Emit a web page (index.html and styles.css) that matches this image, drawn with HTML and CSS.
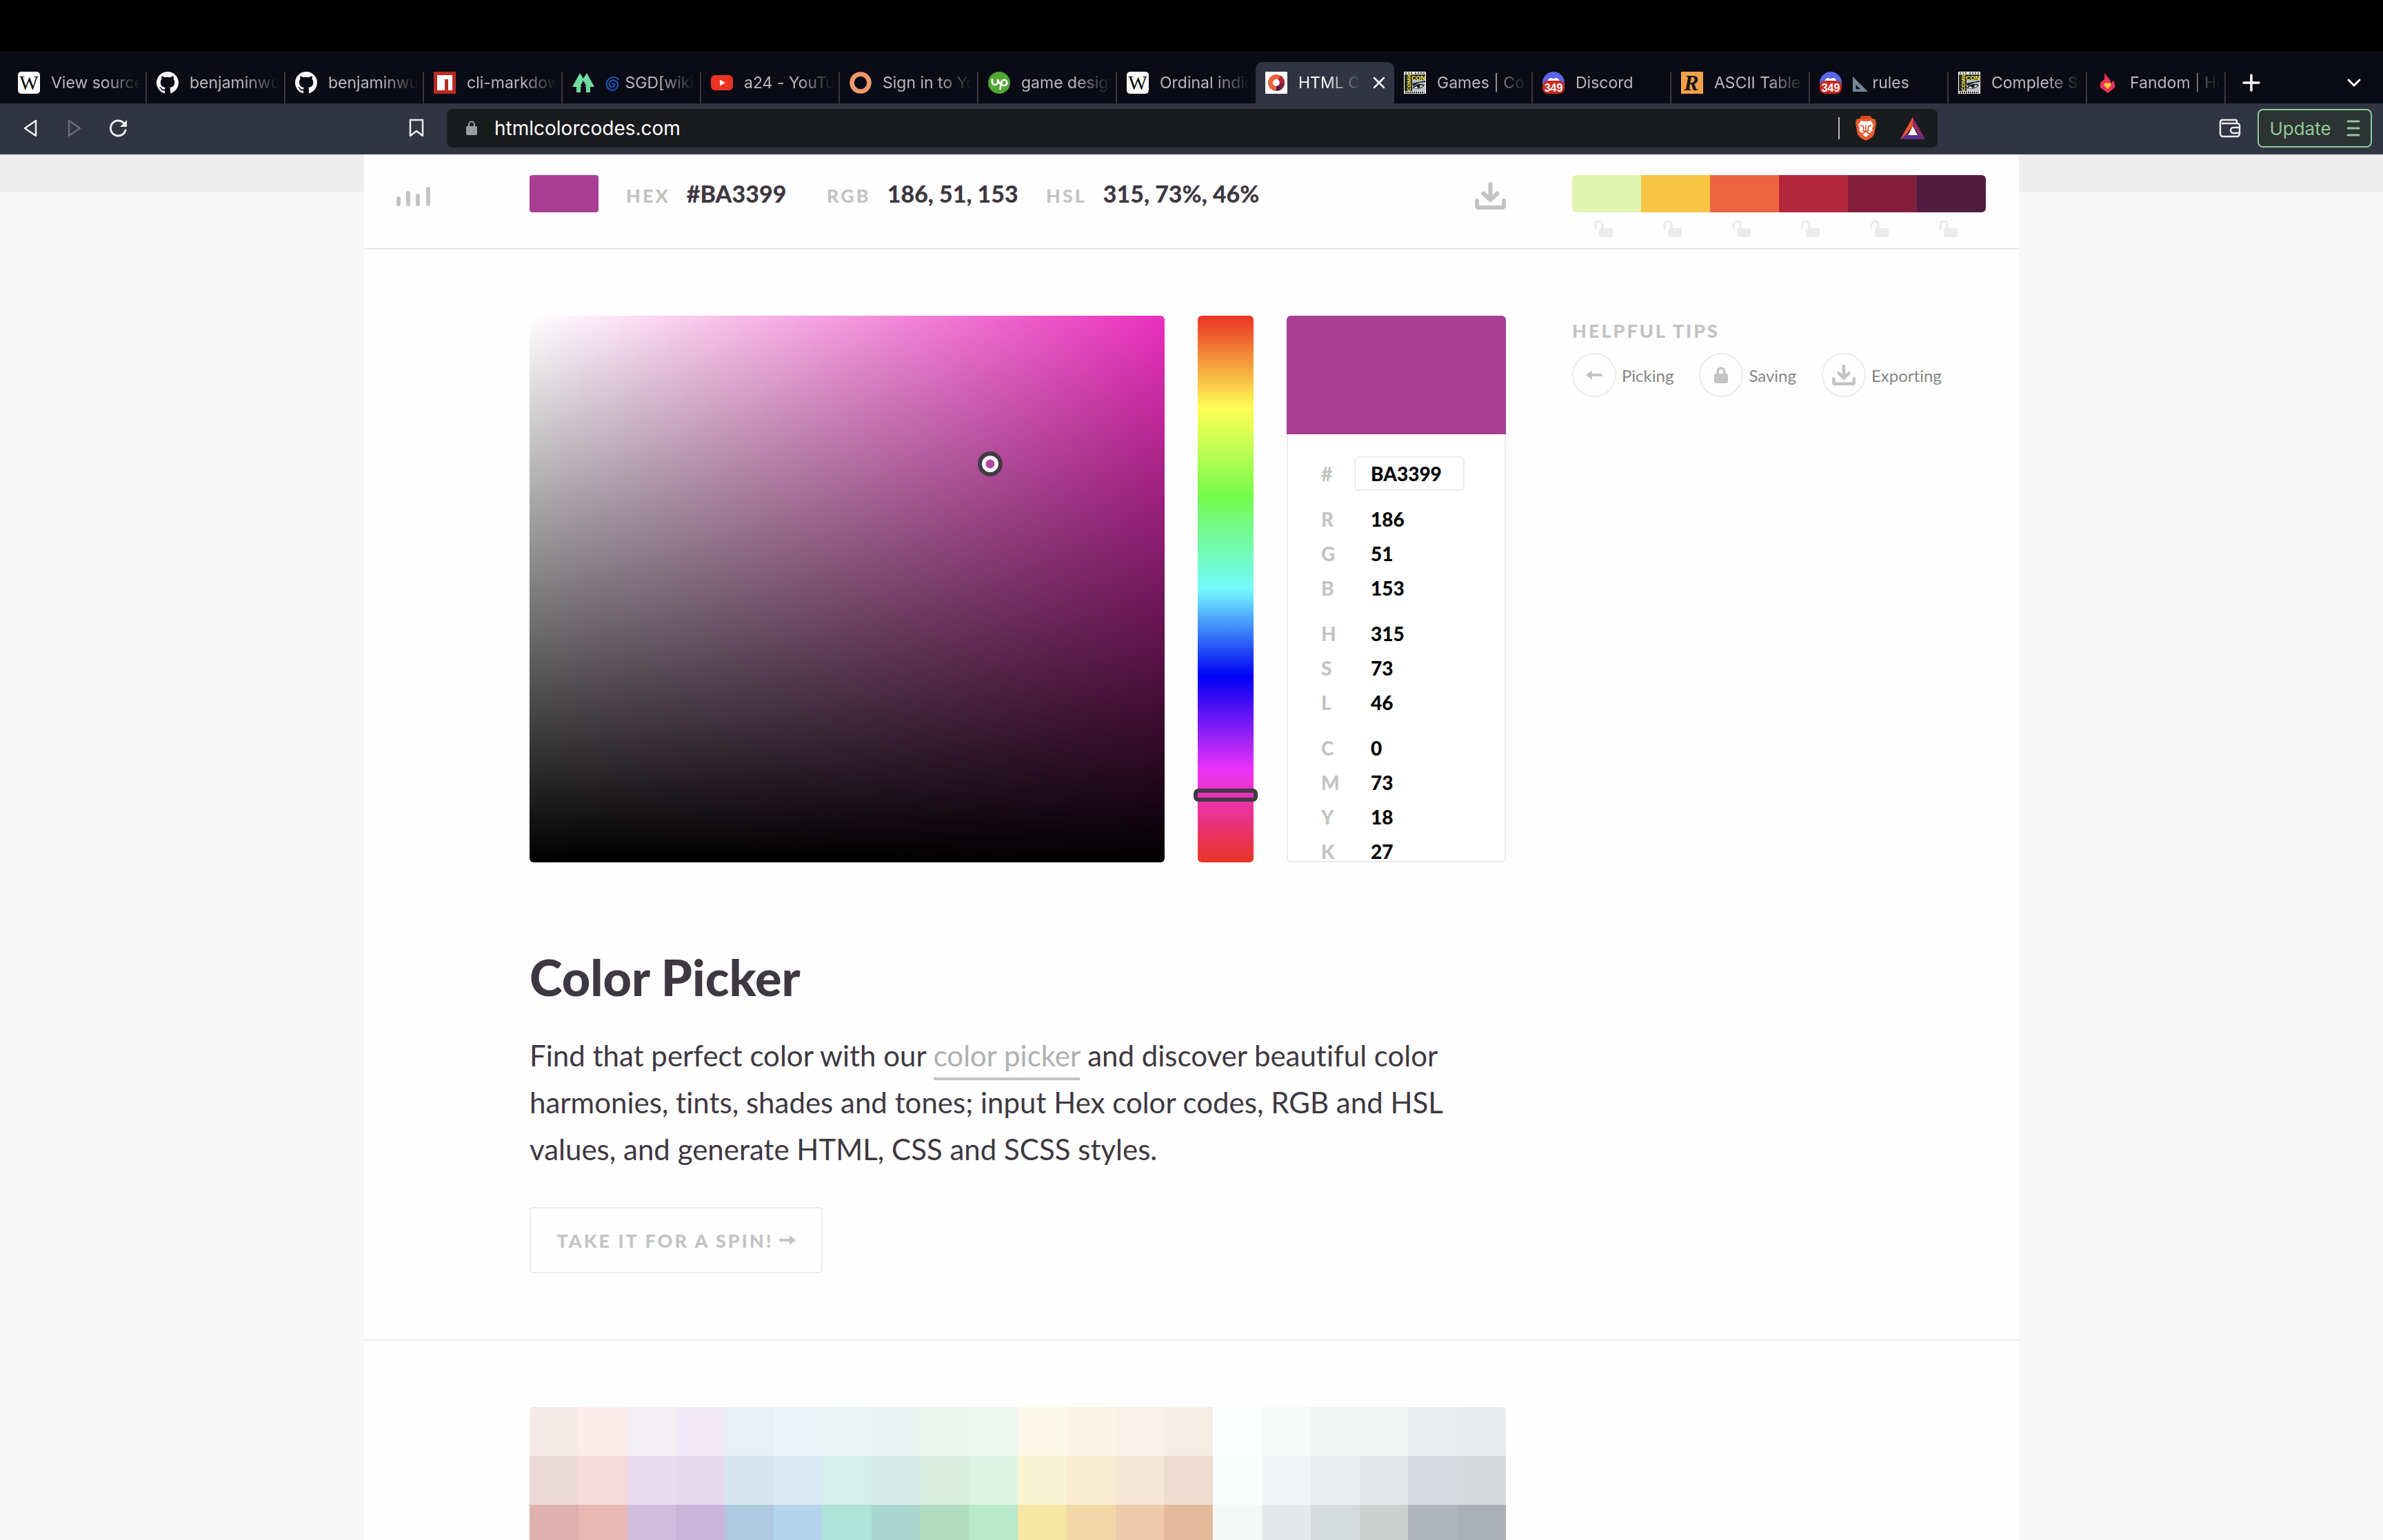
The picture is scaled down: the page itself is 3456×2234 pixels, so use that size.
FILE: index.html
```html
<!DOCTYPE html>
<html lang="en">
<head>
<meta charset="utf-8">
<title>HTML Color Codes</title>
<link rel="stylesheet" href="styles.css">
</head>
<body>
<svg class="defs" aria-hidden="true">
  <symbol id="i-wiki" viewBox="0 0 32 32"><rect width="32" height="32" rx="5" fill="#fff"/><text x="16" y="26" text-anchor="middle" font-family="Liberation Serif, serif" font-size="29" fill="#000">W</text></symbol>
  <symbol id="i-github" viewBox="0 0 16 16"><path fill="#fff" d="M8 0C3.58 0 0 3.58 0 8c0 3.54 2.29 6.53 5.47 7.59.4.07.55-.17.55-.38 0-.19-.01-.82-.01-1.49-2.01.37-2.53-.49-2.69-.94-.09-.23-.48-.94-.82-1.13-.28-.15-.68-.52-.01-.53.63-.01 1.08.58 1.23.82.72 1.21 1.87.87 2.33.66.07-.52.28-.87.51-1.07-1.78-.2-3.64-.89-3.64-3.95 0-.87.31-1.59.82-2.15-.08-.2-.36-1.02.08-2.12 0 0 .67-.21 2.2.82.64-.18 1.32-.27 2-.27s1.36.09 2 .27c1.53-1.04 2.2-.82 2.2-.82.44 1.1.16 1.92.08 2.12.51.56.82 1.27.82 2.15 0 3.07-1.87 3.75-3.65 3.95.29.25.54.73.54 1.48 0 1.07-.01 1.93-.01 2.2 0 .21.15.46.55.38A8.01 8.01 0 0 0 16 8c0-4.42-3.58-8-8-8z"/></symbol>
  <symbol id="i-npm" viewBox="0 0 32 32"><rect width="32" height="32" fill="#b92b20"/><path fill="#fff" d="M5 5h22v22h-6V11h-5v16H5z"/></symbol>
  <symbol id="i-trees" viewBox="0 0 32 32"><path fill="#6fdc9f" d="M11 2l5 8 5-8 11 20h-6v8h-6v-8h-2l2-2-4-7-4 7 2 2h-2v8H6v-8H0z"/></symbol>
  <symbol id="i-youtube" viewBox="0 0 32 32"><rect y="5" width="32" height="22" rx="6" fill="#ea3323"/><path fill="#fff" d="M13 11.500l8 4.500-8 4.500z"/></symbol>
  <symbol id="i-ring" viewBox="0 0 32 32"><circle cx="16" cy="16" r="12.500" fill="none" stroke="#f09a6a" stroke-width="6.500"/></symbol>
  <symbol id="i-up" viewBox="0 0 32 32"><circle cx="16" cy="16" r="16" fill="#51a832"/><path d="M6 11v4a4 4 0 0 0 8 0v-4c1 4 3 7 5 8M17.500 25l2-10a4 4 0 1 1 3.500 5c-2 0-3.500-1-4.500-3" fill="none" stroke="#fff" stroke-width="2.700" stroke-linecap="round"/></symbol>
  <symbol id="i-hcc" viewBox="0 0 32 32"><rect width="32" height="32" rx="1" fill="#fff"/><circle cx="16" cy="16" r="8.500" fill="none" stroke="#e9623f" stroke-width="7"/><path d="M20.500 8.800a8.500 8.500 0 0 1 4 7.200" fill="none" stroke="#b3263a" stroke-width="7"/><path d="M24.500 16a8.500 8.500 0 0 1-3 6.500" fill="none" stroke="#821e3c" stroke-width="7"/><path d="M21.500 22.500a8.500 8.500 0 0 1-5.500 2" fill="none" stroke="#501d42" stroke-width="7"/></symbol>
  <symbol id="i-comic" viewBox="0 0 32 32"><rect width="32" height="32" fill="#fff"/><path d="M2 1h2v2H2zm4 0h2v2H6zm4 0h2v2h-2zm6 0h2v2h-2zm4 0h2v2h-2zm4 0h2v2h-2zm4 0h2v2h-2z" fill="#333"/><rect x="1" y="4" width="30" height="24" fill="#2a2a1c"/><rect x="12" y="12" width="19" height="16" fill="#b4c1c9"/><text x="21" y="11.500" text-anchor="middle" font-family="Liberation Sans, sans-serif" font-weight="700" font-size="9" fill="#f8ee48">CON</text><text transform="translate(9.500 28) rotate(-90)" font-family="Liberation Sans, sans-serif" font-weight="700" font-size="8" fill="#f8ee48">COMIC</text><path d="M12 17l19-4v2c-8 0-14 3-17 6zM12 24c5-6 11-7 18-5-3 5-10 7-18 5z" fill="#111"/><path d="M14 24c4-4 8-5 14-4-3 3-8 5-14 4z" fill="#fff"/><circle cx="21" cy="21" r="2.500" fill="#111"/><path d="M2 30h28" stroke="#222" stroke-width="2.500" stroke-dasharray="2 1"/></symbol>
  <symbol id="i-discord" viewBox="0 0 32 32"><circle cx="16" cy="16" r="16" fill="#5966e8"/><path d="M7 14c1-3 3-5 6-5l1 1h4l1-1c3 0 5 2 6 5z" fill="#fff"/><rect y="13" width="32" height="19" rx="8" fill="#c92a1f"/><text x="16" y="28.500" text-anchor="middle" font-family="Liberation Sans, sans-serif" font-weight="700" font-size="16" fill="#fff">349</text></symbol>
  <symbol id="i-ascii" viewBox="0 0 32 32"><rect width="32" height="32" fill="#f2a04b"/><text x="15" y="27" text-anchor="middle" font-family="Liberation Serif, serif" font-style="italic" font-weight="700" font-size="32" fill="#111">R</text></symbol>
  <symbol id="i-fandom" viewBox="0 0 32 32"><path fill="#e8335a" d="M11 2l9 11v4l4-4 2 4v6L16 31 5 23v-7l6-5z"/><path fill="#fbc440" d="M15.500 25l-5-5a3 3 0 0 1 5-3 3 3 0 0 1 5 3z"/></symbol>
  <symbol id="i-spiral" viewBox="0 0 22 24"><path d="M10 12c1-2 4 0 3 2-1 3-6 3-7-1-1-5 4-8 8-6 5 2 5 9 1 12-5 4-12 1-13-5C1 7 6 2 12 2c4 0 6 2 7 4" fill="none" stroke="#1459c4" stroke-width="2"/></symbol>
  <symbol id="i-triangle" viewBox="0 0 24 26"><path fill="#738899" fill-rule="evenodd" d="M0 1l24 24H0zM5 14v7h7z"/></symbol>
  <symbol id="i-unlock" viewBox="0 0 28 24"><path d="M2 11V6a5 5 0 0 1 10 0v6" fill="none" stroke="#ebebeb" stroke-width="3.500" stroke-linecap="round"/><rect x="7" y="11" width="20" height="13" rx="3" fill="#ebebeb"/></symbol>
  <symbol id="i-download" viewBox="0 0 45 40"><path d="M22.500 3v22M12.500 16.500l10 9.500 10-9.500M3 27v8a2 2 0 0 0 2 2h35a2 2 0 0 0 2-2v-8" fill="none" stroke="#c3c3c3" stroke-width="6" stroke-linecap="round" stroke-linejoin="round"/></symbol>
</svg>

<div class="browser">
  <div class="menubar"></div>
  <div class="tabstrip">
    <nav class="tabs" aria-label="Tabs">
      <a class="tab" href="#"><svg><use href="#i-wiki"/></svg><span>View source</span></a>
      <a class="tab" href="#"><svg><use href="#i-github"/></svg><span>benjaminwu</span></a>
      <a class="tab" href="#"><svg><use href="#i-github"/></svg><span>benjaminwu</span></a>
      <a class="tab" href="#"><svg><use href="#i-npm"/></svg><span>cli-markdown</span></a>
      <a class="tab" href="#"><svg><use href="#i-trees"/></svg><span><svg class="emoji"><use href="#i-spiral"/></svg> SGD[wiki]</span></a>
      <a class="tab" href="#"><svg><use href="#i-youtube"/></svg><span>a24 - YouTube</span></a>
      <a class="tab" href="#"><svg><use href="#i-ring"/></svg><span>Sign in to Yo</span></a>
      <a class="tab" href="#"><svg><use href="#i-up"/></svg><span>game design</span></a>
      <a class="tab tab-before-active" href="#"><svg><use href="#i-wiki"/></svg><span>Ordinal indicator</span></a>
      <div class="tab tab-active"><svg><use href="#i-hcc"/></svg><span>HTML Color</span><button class="close" aria-label="Close tab"><svg viewBox="0 0 20 20"><path d="M3 3l14 14M17 3L3 17" stroke="#fff" stroke-width="2.500" stroke-linecap="round"/></svg></button></div>
      <a class="tab" href="#"><svg><use href="#i-comic"/></svg><span>Games | Comic</span></a>
      <a class="tab" href="#"><svg><use href="#i-discord"/></svg><span>Discord</span></a>
      <a class="tab" href="#"><svg><use href="#i-ascii"/></svg><span>ASCII Table -</span></a>
      <a class="tab" href="#"><svg><use href="#i-discord"/></svg><span><svg class="emoji"><use href="#i-triangle"/></svg> rules</span></a>
      <a class="tab" href="#"><svg><use href="#i-comic"/></svg><span>Complete Sch</span></a>
      <a class="tab" href="#"><svg><use href="#i-fandom"/></svg><span>Fandom | Home</span></a>
    </nav>
    <div class="tab-actions">
      <button aria-label="New tab"><svg width="26" height="26" viewBox="0 0 26 26"><path d="M13 2v22M2 13h22" stroke="#fff" stroke-width="3.500" stroke-linecap="round"/></svg></button>
      <button aria-label="Search tabs"><svg width="20" height="14" viewBox="0 0 20 14"><path d="M2 3l8 8 8-8" fill="none" stroke="#fff" stroke-width="3" stroke-linecap="round" stroke-linejoin="round"/></svg></button>
    </div>
  </div>
  <div class="toolbar">
    <div class="nav-buttons">
      <button aria-label="Back"><svg width="26" height="28" viewBox="0 0 26 28"><path d="M21 3L5 14l16 11z" fill="none" stroke="#ececee" stroke-width="2.500" stroke-linejoin="round"/></svg></button>
      <button aria-label="Forward"><svg width="26" height="28" viewBox="0 0 26 28"><path d="M5 3l16 11L5 25z" fill="none" stroke="#6c6e79" stroke-width="2.500" stroke-linejoin="round"/></svg></button>
      <button aria-label="Reload"><svg width="28" height="28" viewBox="0 0 28 28"><path d="M24 17A11 11 0 1 1 21 6l3 3" fill="none" stroke="#ececee" stroke-width="3" stroke-linecap="round"/><path d="M26 2v10H16z" fill="#ececee"/></svg></button>
      <button class="bookmark" aria-label="Bookmark"><svg width="22" height="28" viewBox="0 0 22 28"><path d="M2 2h18v23l-9-7-9 7z" fill="none" stroke="#ececee" stroke-width="2.500" stroke-linejoin="round"/></svg></button>
    </div>
    <div class="address">
      <svg width="16" height="22" viewBox="0 0 16 22"><rect y="8" width="16" height="13" rx="2" fill="#9a9ea4"/><path d="M4 9V5.500a4 4 0 0 1 8 0V9" fill="none" stroke="#9a9ea4" stroke-width="2.200"/></svg>
      <input type="text" aria-label="Address" value="htmlcolorcodes.com">
      <span class="address-rule"></span>
      <button aria-label="Shields"><svg width="32" height="36" viewBox="0 0 32 36"><path d="M10 0h12l3 4 5 1 1 6-3 16-4 5-8 4-8-4-4-5L1 11l1-6 5-1z" fill="#ec5a29"/><path d="M10 0h12l3 4H7z" fill="#d4481f"/><path d="M9 7l4 1h6l4-1 4 6-2 5 1 3-4 4-6-3-6 3-4-4 1-3-2-5z" fill="#fff"/><path d="M8 14l4 1 1 3-1 3 4 2 4-2-1-3 1-3 4-1M16 14v8" fill="none" stroke="#d4481f" stroke-width="1.500"/><path d="M16 24l5 3-5 4-5-4z" fill="#fff"/></svg></button>
      <button aria-label="Rewards"><svg width="36" height="32" viewBox="0 0 36 32"><path d="M18 0v13L8 26l-8 6z" fill="#f0552f"/><path d="M18 0l18 32-9-6-9-13z" fill="#94285f"/><path d="M0 32l8-7h20l8 7z" fill="#5f2d8f"/><path d="M18 13l7 13H11z" fill="#fff"/></svg></button>
    </div>
    <div class="toolbar-end">
      <button aria-label="Wallet"><svg width="32" height="28" viewBox="0 0 32 28"><path d="M26 7V4a2 2 0 0 0-2-2H5a3 3 0 0 0-3 3v17a4 4 0 0 0 4 4h20a4 4 0 0 0 4-4V10a3 3 0 0 0-3-3H4M30 13h-9a4 4 0 0 0 0 8h9" fill="none" stroke="#ececee" stroke-width="2.500"/></svg></button>
      <button class="update">Update <svg width="20" height="26" viewBox="0 0 20 26"><path d="M2 3h16M2 13h16M2 23h16" stroke="#8fc99a" stroke-width="3" stroke-linecap="round"/></svg></button>
    </div>
  </div>

  <div class="page">
    <div class="sheet">
      <header class="readout-bar">
        <a class="logo" href="#" aria-label="Menu"><svg width="50" height="28" viewBox="0 0 50 28"><path d="M3 17v8M17 9v16M31 13v12M46 3v22" stroke="#c3c3c3" stroke-width="6" stroke-linecap="round"/></svg></a>
        <div class="readout">
          <span class="readout-swatch"></span>
          <dl class="codes">
            <div><dt>HEX</dt><dd>#BA3399</dd></div>
            <div><dt>RGB</dt><dd>186, 51, 153</dd></div>
            <div><dt>HSL</dt><dd>315, 73%, 46%</dd></div>
          </dl>
          <button class="export" aria-label="Export"><svg width="45" height="40"><use href="#i-download"/></svg></button>
        </div>
        <div class="palette">
          <div class="palette-colors">
            <span style="background:#e0f6ae"></span><span style="background:#f7c544"></span><span style="background:#ed6340"></span><span style="background:#b4263a"></span><span style="background:#821e3c"></span><span style="background:#501d42"></span>
          </div>
          <div class="palette-locks">
            <button aria-label="Lock color 1"><svg><use href="#i-unlock"/></svg></button><button aria-label="Lock color 2"><svg><use href="#i-unlock"/></svg></button><button aria-label="Lock color 3"><svg><use href="#i-unlock"/></svg></button><button aria-label="Lock color 4"><svg><use href="#i-unlock"/></svg></button><button aria-label="Lock color 5"><svg><use href="#i-unlock"/></svg></button><button aria-label="Lock color 6"><svg><use href="#i-unlock"/></svg></button>
          </div>
        </div>
      </header>

      <section class="block">
        <div class="content">
          <div class="picker">
            <div class="shade"><span class="shade-handle"></span></div>
            <input class="hue" type="range" min="0" max="360" value="319" aria-label="Hue">
            <form class="values">
              <div class="values-swatch"></div>
              <div class="values-body">
                <div class="group"><label class="row row-hex"><span>#</span><input type="text" value="BA3399"></label></div>
                <div class="group">
                  <label class="row"><span>R</span><input type="text" value="186"></label>
                  <label class="row"><span>G</span><input type="text" value="51"></label>
                  <label class="row"><span>B</span><input type="text" value="153"></label>
                </div>
                <div class="group">
                  <label class="row"><span>H</span><input type="text" value="315"></label>
                  <label class="row"><span>S</span><input type="text" value="73"></label>
                  <label class="row"><span>L</span><input type="text" value="46"></label>
                </div>
                <div class="group">
                  <label class="row"><span>C</span><input type="text" value="0"></label>
                  <label class="row"><span>M</span><input type="text" value="73"></label>
                  <label class="row"><span>Y</span><input type="text" value="18"></label>
                  <label class="row"><span>K</span><input type="text" value="27"></label>
                </div>
              </div>
            </form>
          </div>
          <h1>Color Picker</h1>
          <p>Find that perfect color with our <a href="#">color picker</a> and discover beautiful color harmonies, tints, shades and tones; input Hex color codes, RGB and HSL values, and generate HTML, CSS and SCSS styles.</p>
          <a class="spin" href="#">Take it for a spin! <svg width="24" height="16" viewBox="0 0 24 16"><path d="M2 8h14" stroke="#c3c3c3" stroke-width="4" stroke-linecap="round"/><path d="M15 1l9 7-9 7z" fill="#c3c3c3"/></svg></a>
        </div>
        <aside class="tips">
          <h2>Helpful tips</h2>
          <ul>
            <li><a href="#"><span class="disc"><svg width="24" height="16" viewBox="0 0 24 16"><path d="M8 8h14" stroke="#c3c3c3" stroke-width="4" stroke-linecap="round"/><path d="M9 1L0 8l9 7z" fill="#c3c3c3"/></svg></span>Picking</a></li>
            <li><a href="#"><span class="disc"><svg width="20" height="24" viewBox="0 0 20 24"><rect y="10" width="20" height="14" rx="3" fill="#c3c3c3"/><path d="M5 12V7a5 5 0 0 1 10 0v5" fill="none" stroke="#c3c3c3" stroke-width="3.500"/></svg></span>Saving</a></li>
            <li><a href="#"><span class="disc"><svg width="34" height="30"><use href="#i-download"/></svg></span>Exporting</a></li>
          </ul>
        </aside>
      </section>

      <section class="block">
        <div class="content chart">
          <span style="background:#f6eae9"></span><span style="background:#fbebea"></span><span style="background:#f4eef5"></span><span style="background:#f2eaf6"></span><span style="background:#e9f1f8"></span><span style="background:#ebf3fb"></span><span style="background:#e9f6f3"></span><span style="background:#e9f3f1"></span><span style="background:#eaf5ed"></span><span style="background:#ecf8f0"></span><span style="background:#fcf8e7"></span><span style="background:#fdf4e7"></span><span style="background:#fbf1e8"></span><span style="background:#f8ece7"></span><span style="background:#fdfefe"></span><span style="background:#f8f9f9"></span><span style="background:#f4f6f5"></span><span style="background:#f2f4f3"></span><span style="background:#ebecee"></span><span style="background:#eaebed"></span>
          <span style="background:#ecd8d6"></span><span style="background:#f6dbd8"></span><span style="background:#e9dcee"></span><span style="background:#e5d9ec"></span><span style="background:#d7e5f0"></span><span style="background:#d9e9f6"></span><span style="background:#d6f1ea"></span><span style="background:#d5ebe7"></span><span style="background:#d8ede0"></span><span style="background:#dbf4e4"></span><span style="background:#f9f2d2"></span><span style="background:#f9ead1"></span><span style="background:#f5e5d5"></span><span style="background:#f0ddcf"></span><span style="background:#fbfcfc"></span><span style="background:#f1f3f5"></span><span style="background:#e9edee"></span><span style="background:#e4e8e8"></span><span style="background:#d7dade"></span><span style="background:#d6d8db"></span>
          <span style="background:#ddb0ab"></span><span style="background:#eab8b3"></span><span style="background:#d2bddf"></span><span style="background:#ccb3da"></span><span style="background:#afcae0"></span><span style="background:#b4d4ee"></span><span style="background:#aee3d7"></span><span style="background:#abd6ce"></span><span style="background:#b2ddc1"></span><span style="background:#b8e9c9"></span><span style="background:#f6e7a7"></span><span style="background:#f3d7a6"></span><span style="background:#eecaac"></span><span style="background:#e4ba9d"></span><span style="background:#f6f8f7"></span><span style="background:#e6e7e9"></span><span style="background:#d6dcdb"></span><span style="background:#ccd1d0"></span><span style="background:#aeb5bd"></span><span style="background:#abb0b7"></span>
        </div>
      </section>
    </div>
  </div>
</div>
</body>
</html>
```
FILE: styles.css
```css
* { box-sizing: border-box; }
body { margin: 0; font-family: Lato, sans-serif; font-variant-ligatures: none; color: #3e3842; background: #f7f7f7; }
button { margin: 0; padding: 0; border: 0; background: none; font: inherit; color: inherit; display: flex; align-items: center; justify-content: center; }
a { color: inherit; text-decoration: none; }
.defs { display: none; }

.browser { height: 100vh; display: flex; flex-direction: column; overflow: hidden; }
.menubar { flex: none; height: 74px; background: #000; }

/* tab strip */
.tabstrip { flex: none; display: flex; height: 76px; padding: 16px 16px 0 12px; background: #0b0b15; font-family: Inter, sans-serif; font-size: 23px; color: #b9b9bb; }
.tabs { flex: 1; display: flex; min-width: 0; }
.tab { position: relative; flex: 1 1 200px; min-width: 0; display: flex; align-items: center; gap: 16px; padding: 0 8px 0 14px; }
.tab > svg { flex: none; width: 32px; height: 32px; }
.tab > span { flex: 1; min-width: 0; overflow: hidden; white-space: nowrap; line-height: 32px; mask-image: linear-gradient(to right, #000 calc(100% - 52px), transparent); }
.tab::after { content: ""; position: absolute; right: 0; top: 14px; bottom: 0; width: 2px; background: #38383c; }
.tab-before-active::after, .tab-active::after { display: none; }
.tab-active { padding-right: 12px; background: #313442; border-radius: 10px 10px 0 0; color: #fff; }
.close svg { width: 20px; height: 20px; }
.emoji { width: 22px; height: 24px; vertical-align: middle; }
.tab-actions { flex: none; width: 212px; padding: 0 0 0 24px; display: flex; align-items: center; justify-content: space-between; }
.tab-actions button:last-child { padding-right: 16px; }

/* toolbar */
.toolbar { flex: none; display: flex; height: 74px; padding-top: 8px; background: #313442; font-family: Inter, sans-serif; }
.nav-buttons { flex: none; width: 648px; height: 56px; padding: 0 12px; display: flex; align-items: center; }
.nav-buttons button { width: 64px; height: 56px; }
.nav-buttons .bookmark { margin-left: auto; }
.address { flex: 1; height: 56px; padding: 0 18px 0 28px; display: flex; align-items: center; border-radius: 8px; background: #1a1b1f; }
.address input { flex: 1; min-width: 0; height: 56px; margin-left: 25px; padding: 0; border: 0; background: none; color: #fff; font: 28px Inter, sans-serif; }
.address-rule { width: 2px; height: 32px; margin-right: 22px; background: #b9b9bb; }
.address button + button { margin-left: 34px; }
.toolbar-end { flex: none; width: 646px; height: 56px; padding-right: 16px; display: flex; align-items: center; justify-content: flex-end; gap: 24px; }
.update { width: 166px; height: 56px; gap: 22px; border: 2px solid #8fc99a; border-radius: 8px; background: #2d3232; color: #8fc99a; font-size: 26px; }

/* page */
.page { flex: 1; min-height: 0; overflow: hidden; background: linear-gradient(#eee 54px, #f7f7f7 54px); }
.sheet { max-width: 2400px; margin: 0 auto; background: #fefefe; }
.readout-bar { display: flex; padding: 30px 48px 16px 0; border-bottom: 2px solid #e9e9e9; }
.logo { flex: none; width: 240px; padding: 17px 0 0 47px; }
.readout { flex: 1; display: flex; align-items: center; height: 54px; }
.readout-swatch { width: 100px; height: 54px; border-radius: 4px; background: #a93e93; }
.codes { flex: 1; margin: 0 0 0 40px; display: grid; grid-template-columns: 291px 318px 1fr; }
.codes div { display: flex; align-items: baseline; gap: 24px; }
.codes dt { font-size: 27px; font-weight: 900; letter-spacing: 3px; color: #c3c3c3; }
.codes dd { margin: 0; font-size: 34px; font-weight: 900; line-height: 54px; }
.export { height: 54px; padding-top: 6px; }
.palette { flex: none; width: 600px; margin-left: 96px; }
.palette-colors { display: flex; height: 54px; border-radius: 6px; overflow: hidden; }
.palette-colors span { flex: 1; }
.palette-locks { display: flex; margin-top: 12px; }
.palette-locks button { flex: 1; height: 24px; padding-right: 8px; }
.palette-locks svg { width: 28px; height: 24px; }

.block { display: grid; grid-template-columns: minmax(0, 1fr) 600px; column-gap: 96px; padding: 96px 48px 96px 240px; }
.block + .block { border-top: 2px solid #e9e9e9; }

.picker { display: flex; gap: 48px; height: 793px; }
.shade { position: relative; flex: 1; border-radius: 6px; background: linear-gradient(to top, #000, transparent), linear-gradient(to right, #fff, #ea2fbc); }
.shade-handle { position: absolute; left: 72.5%; top: 27.1%; width: 36px; height: 36px; margin: -18px 0 0 -18px; border: 6px solid #423a45; border-radius: 50%; background: radial-gradient(circle, #b44a9c 6px, #fff 7px); }
.hue { appearance: none; writing-mode: vertical-lr; flex: none; width: 81px; height: 100%; margin: 0; border-radius: 6px; background: linear-gradient(#ea3323, #ffff54 17%, #75fb4c 33%, #73fbfd 50%, #0000f5 66%, #ea33f7 83%, #ea3323); }
.hue::-webkit-slider-thumb { appearance: none; width: 93px; height: 19px; border: 6px solid #423a45; border-radius: 7px; background: transparent; }
.values { flex: none; width: 318px; display: flex; flex-direction: column; }
.values-swatch { flex: none; height: 172px; border-radius: 6px 6px 0 0; background: #a93e93; }
.values-body { flex: 1; min-height: 0; overflow: hidden; padding-top: 32px; border: 2px solid #ebebeb; border-top: 0; border-radius: 0 0 6px 6px; background: #fff; }
.group { margin-bottom: 16px; }
.row { display: flex; align-items: center; height: 50px; padding-left: 48px; font-size: 28px; font-weight: 900; color: #c3c3c3; }
.row span { width: 48px; }
.row input { width: 160px; height: 50px; padding: 0 0 0 22px; border: 2px solid transparent; border-radius: 6px; background: none; font: inherit; color: #000; }
.row-hex input { border-color: #ebebeb; }

h1 { margin: 126px 0 40px; font-size: 72px; line-height: 80px; font-weight: 900; }
p { margin: 0 0 50px; font-size: 42px; line-height: 68px; }
p a { padding-bottom: 7px; border-bottom: 4px solid #c3c3c3; color: #b0b0b0; }
.spin { display: inline-flex; align-items: center; justify-content: center; gap: 8px; min-width: 425px; height: 96px; border: 2px solid #ebebeb; border-radius: 4px; font-size: 27px; font-weight: 900; letter-spacing: 3px; text-transform: uppercase; color: #c3c3c3; vertical-align: top; }

.tips h2 { margin: 0 0 10px; font-size: 27px; line-height: 44px; font-weight: 900; letter-spacing: 3px; text-transform: uppercase; color: #c3c3c3; }
.tips ul { display: flex; gap: 37px; margin: 0; padding: 0; list-style: none; }
.tips a { display: flex; align-items: center; gap: 8px; font-size: 24px; color: #858585; }
.disc { display: flex; align-items: center; justify-content: center; width: 64px; height: 64px; border: 2px solid #ebebeb; border-radius: 50%; }

.chart { display: grid; grid-template-columns: repeat(20, 1fr); grid-auto-rows: 71px; border-radius: 6px; overflow: hidden; }
```
